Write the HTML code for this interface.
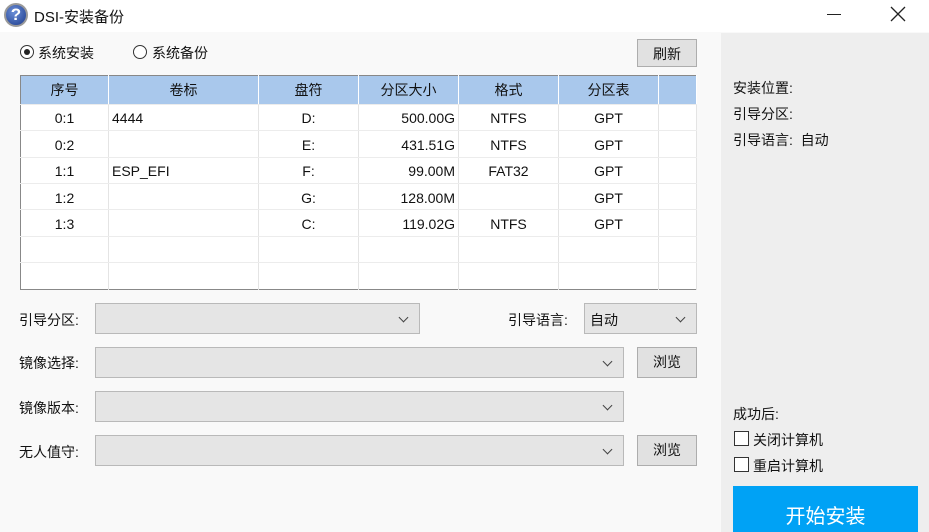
<!DOCTYPE html><html><head><meta charset="utf-8"><style>
*{box-sizing:border-box;margin:0;padding:0}
html,body{width:929px;height:532px;overflow:hidden}
body{background:#f9f9f9;font-family:"Liberation Sans","Noto Sans CJK SC",sans-serif;font-size:14px;color:#111;position:relative}
.a{position:absolute}
.tb{left:0;top:0;width:929px;height:32px;background:#fff}
.rp{left:721px;top:33px;width:208px;height:499px;background:#eeeeee}
table{position:absolute;left:20px;top:75px;width:677px;height:215px;border:1px solid #888;border-collapse:collapse;background:#fff;table-layout:fixed}
td,th{border-right:1px solid #e4e4e4;border-bottom:1px solid #ececec;height:26px;font-weight:normal;font-size:14px;padding:2px 3px 0;white-space:nowrap}
th{background:#a9c8ec;border-right:1px solid #fff;height:28px;padding-top:0}
.c{text-align:center}.r{text-align:right}
.btn{background:#e1e1e1;border:1px solid #adadad;text-align:center;line-height:28px}
.cb{background:#e5e5e5;border:1px solid #b9b9b9;height:31px}
.cb:after{content:"";position:absolute;right:12px;top:10px;width:6px;height:6px;border-right:1.3px solid #444;border-bottom:1.3px solid #444;transform:rotate(45deg)}
.chk{width:15px;height:15px;border:1px solid #333;background:#fff}
</style></head><body>
<div class="a tb"></div>
<div class="a" style="left:4px;top:3px;width:24px;height:24px;border-radius:50%;background:radial-gradient(circle at 40% 35%,#6b8fd8,#1c3a8a);border:2px solid #999;color:#fff;font-weight:bold;text-align:center;line-height:20px;font-size:17px">?</div>
<div class="a" style="left:34px;top:6px;font-size:15px">DSI-安装备份</div>
<div class="a" style="left:827px;top:14px;width:14px;height:1px;background:#222"></div>
<svg class="a" style="left:890px;top:6px" width="16" height="16"><path d="M1 1L15 15M15 1L1 15" stroke="#222" stroke-width="1.3"/></svg>
<div class="a rp"></div>
<div class="a" style="left:20px;top:45px;width:14px;height:14px;border:1px solid #333;border-radius:50%;background:#fff"><div style="margin:3px;width:6px;height:6px;border-radius:50%;background:#222"></div></div>
<div class="a" style="left:38px;top:43px">系统安装</div>
<div class="a" style="left:133px;top:45px;width:14px;height:14px;border:1px solid #333;border-radius:50%;background:#fff"></div>
<div class="a" style="left:152px;top:43px">系统备份</div>
<div class="a btn" style="left:637px;top:39px;width:60px;height:28px">刷新</div>
<table>
<colgroup><col style="width:88px"><col style="width:150px"><col style="width:100px"><col style="width:100px"><col style="width:100px"><col style="width:100px"><col></colgroup>
<tr><th>序号</th><th>卷标</th><th>盘符</th><th>分区大小</th><th>格式</th><th>分区表</th><th></th></tr>
<tr><td class="c">0:1</td><td>4444</td><td class="c">D:</td><td class="r">500.00G</td><td class="c">NTFS</td><td class="c">GPT</td><td></td></tr>
<tr><td class="c">0:2</td><td></td><td class="c">E:</td><td class="r">431.51G</td><td class="c">NTFS</td><td class="c">GPT</td><td></td></tr>
<tr><td class="c">1:1</td><td>ESP_EFI</td><td class="c">F:</td><td class="r">99.00M</td><td class="c">FAT32</td><td class="c">GPT</td><td></td></tr>
<tr><td class="c">1:2</td><td></td><td class="c">G:</td><td class="r">128.00M</td><td class="c"></td><td class="c">GPT</td><td></td></tr>
<tr><td class="c">1:3</td><td></td><td class="c">C:</td><td class="r">119.02G</td><td class="c">NTFS</td><td class="c">GPT</td><td></td></tr>
<tr><td></td><td></td><td></td><td></td><td></td><td></td><td></td></tr>
<tr><td style="border-bottom:none"></td><td style="border-bottom:none"></td><td style="border-bottom:none"></td><td style="border-bottom:none"></td><td style="border-bottom:none"></td><td style="border-bottom:none"></td><td style="border-bottom:none"></td></tr>
</table>
<div class="a" style="left:19px;top:310px">引导分区:</div>
<div class="a cb" style="left:95px;top:303px;width:325px"></div>
<div class="a" style="left:508px;top:310px">引导语言:</div>
<div class="a cb" style="left:584px;top:303px;width:113px"><span style="position:absolute;left:5px;top:6px">自动</span></div>
<div class="a" style="left:19px;top:353px">镜像选择:</div>
<div class="a cb" style="left:95px;top:347px;width:529px"></div>
<div class="a btn" style="left:637px;top:347px;width:60px;height:31px;line-height:29px">浏览</div>
<div class="a" style="left:19px;top:398px">镜像版本:</div>
<div class="a cb" style="left:95px;top:391px;width:529px"></div>
<div class="a" style="left:19px;top:442px">无人值守:</div>
<div class="a cb" style="left:95px;top:435px;width:529px"></div>
<div class="a btn" style="left:637px;top:435px;width:60px;height:31px;line-height:29px">浏览</div>
<div class="a" style="left:733px;top:78px">安装位置:</div>
<div class="a" style="left:733px;top:104px">引导分区:</div>
<div class="a" style="left:733px;top:130px">引导语言:&nbsp; 自动</div>
<div class="a" style="left:733px;top:404px">成功后:</div>
<div class="a chk" style="left:734px;top:431px"></div><div class="a" style="left:753px;top:430px">关闭计算机</div>
<div class="a chk" style="left:734px;top:457px"></div><div class="a" style="left:753px;top:456px">重启计算机</div>
<div class="a" style="left:733px;top:486px;width:185px;height:46px;background:#00a2f5;color:#fff;font-size:20px;text-align:center;line-height:62px">开始安装</div>
</body></html>
